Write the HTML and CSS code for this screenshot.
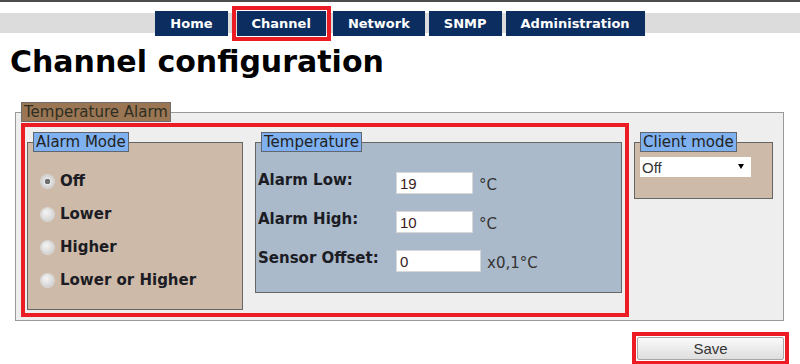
FILE: index.html
```html
<!DOCTYPE html>
<html lang="en">
<head>
  <meta charset="UTF-8">
  <title>Channel configuration</title>
  <meta name="viewport" content="width=device-width, initial-scale=1.0">
  <link rel="stylesheet" href="styles.css">
</head>
<body>
  <nav class="menu">
    <a href="#">Home</a>
    <a href="#" class="current">Channel</a>
    <a href="#">Network</a>
    <a href="#">SNMP</a>
    <a href="#">Administration</a>
  </nav>

  <h1>Channel configuration</h1>

  <form>
    <fieldset class="alarm">
      <legend>Temperature Alarm</legend>
      <div class="alarm-body">
        <div class="marked">
          <fieldset class="box mode">
            <legend>Alarm Mode</legend>
            <label class="radio"><input type="radio" name="mode" checked><span>Off</span></label>
            <label class="radio"><input type="radio" name="mode"><span>Lower</span></label>
            <label class="radio"><input type="radio" name="mode"><span>Higher</span></label>
            <label class="radio"><input type="radio" name="mode"><span>Lower or Higher</span></label>
          </fieldset>

          <fieldset class="box temp">
            <legend>Temperature</legend>
            <div class="row">
              <label for="low">Alarm Low:</label>
              <input type="text" id="low" value="19">
              <span class="unit">°C</span>
            </div>
            <div class="row">
              <label for="high">Alarm High:</label>
              <input type="text" id="high" value="10">
              <span class="unit">°C</span>
            </div>
            <div class="row">
              <label for="offset">Sensor Offset:</label>
              <input type="text" id="offset" class="wide" value="0">
              <span class="unit">x0,1°C</span>
            </div>
          </fieldset>
        </div>

        <fieldset class="box client">
          <legend>Client mode</legend>
          <span class="select-wrap">
            <select>
              <option>Off</option>
              <option>On</option>
            </select>
          </span>
        </fieldset>
      </div>
    </fieldset>

    <div class="actions">
      <span class="save-mark">
        <button type="button" class="save">Save</button>
      </span>
    </div>
  </form>
</body>
</html>
```

FILE: styles.css
```css
:root {
  --navy: #0b2d5f;
  --mark: #ec1c24;
  --brown: #cdbaa9;
  --steel: #aabacb;
  --legend-blue: #7fb1f0;
}

html {
  height: 100%;
}

body {
  margin: 0;
  min-height: 100%;
  box-sizing: border-box;
  border-top: 2px solid #4d4d4d;
  border-bottom: 2px solid #4d4d4d;
  font-family: 'DejaVu Sans', Verdana, sans-serif;
  font-size: 15px;
  color: #222;
  background: #fff;
}

/* menu */
.menu {
  display: flex;
  justify-content: center;
  gap: 4px;
  padding-top: 9px;
  background: linear-gradient(#fff 0 11px, #dcdcdc 11px 31px, #fff 31px);
}

.menu a {
  display: block;
  height: 25px;
  line-height: 25px;
  padding: 0 15px;
  background: var(--navy);
  color: #fff;
  font-size: 13px;
  font-weight: 700;
  text-decoration: none;
}

.menu a.current {
  margin: 0 3px 0 5px;
  outline: 4px solid var(--mark);
  outline-offset: 1px;
}

h1 {
  margin: 8px 0 23px 10px;
  font-size: 30px;
  line-height: 35px;
  color: #000;
}

/* fieldsets */
fieldset {
  margin: 0;
  min-width: 0;
}

legend {
  padding: 0 2px;
  line-height: 18px;
  border: 1px solid #5f6670;
  color: #222;
}

.alarm {
  margin: 0 16px 0 15px;
  padding: 1px 5px 3px;
  border: 1px solid #999;
  background: #eee;
}

.alarm > legend {
  background: #9a7654;
  color: #2e2e22;
  border-color: #6e6e6e;
}

.alarm-body {
  display: flex;
  align-items: flex-start;
}

.marked {
  display: flex;
  align-items: flex-start;
  gap: 12px;
  padding: 5px 3px 3px 2px;
  border: 4px solid var(--mark);
}

.box {
  border: 1px solid #666;
}

.box > legend {
  background: var(--legend-blue);
}

/* alarm mode */
.mode {
  width: 216px;
  box-sizing: border-box;
  padding: 12px 5px 13px;
  background: var(--brown);
}

.radio {
  display: flex;
  align-items: center;
  gap: 6px;
  height: 33px;
  padding-left: 8px;
  font-weight: 700;
  color: #1c1c24;
}

.radio input {
  appearance: none;
  width: 13px;
  height: 13px;
  margin: 2px 0 0;
  border-radius: 50%;
  background: radial-gradient(circle at 40% 35%, #f4f4f4, #d6d6d6 70%);
  box-shadow: 0 0 0 1px #d8d8d8;
}

.radio input:checked {
  background: radial-gradient(circle, #6e6e6e 0 2.5px, #e6e6e6 3px, #d2d2d2 70%);
}

/* temperature */
.temp {
  width: 367px;
  box-sizing: border-box;
  padding: 20px 2px 20px;
  background: var(--steel);
}

.temp > legend {
  margin-left: 3px;
}

.row {
  display: flex;
  align-items: flex-start;
  height: 22px;
}

.row + .row {
  margin-top: 17px;
}

.row label {
  width: 138px;
  line-height: 16px;
  font-weight: 700;
  color: #1c1c24;
}

.row input {
  width: 77px;
  height: 22px;
  box-sizing: border-box;
  margin: 0;
  padding: 0 3px;
  border: 1px solid #d8d8d8;
  font-family: 'Liberation Sans', Arial, sans-serif;
  font-size: 15px;
  color: #3a1c22;
}

.row input.wide {
  width: 85px;
}

.unit {
  margin-left: 6px;
  padding-top: 3px;
  line-height: 20px;
  color: #333;
}

/* client mode */
.client {
  width: 139px;
  box-sizing: border-box;
  margin: 9px 0 0 5px;
  padding: 5px 0 21px 5px;
  background: var(--brown);
}

.select-wrap {
  position: relative;
  display: block;
  width: 111px;
}

.select-wrap select {
  appearance: none;
  display: block;
  width: 111px;
  height: 20px;
  margin: 0;
  padding: 0 2px;
  border: none;
  background: #fff;
  font-family: 'Liberation Sans', Arial, sans-serif;
  font-size: 15px;
  color: #333;
}

.select-wrap::after {
  content: "";
  position: absolute;
  right: 7px;
  top: 7px;
  border-left: 3.5px solid transparent;
  border-right: 3.5px solid transparent;
  border-top: 5px solid #000;
  pointer-events: none;
}

/* save */
.actions {
  display: flex;
  justify-content: flex-end;
  padding: 11px 11px 0 0;
}

.save-mark {
  display: block;
  padding: 1px;
  border: 4px solid var(--mark);
}

.save {
  display: block;
  width: 147px;
  height: 23px;
  margin: 0;
  border: 1px solid #a8a8a8;
  border-radius: 2px;
  background: linear-gradient(#fafafa, #dedede);
  font-family: 'Liberation Sans', Arial, sans-serif;
  font-size: 15px;
  color: #333;
}
```
